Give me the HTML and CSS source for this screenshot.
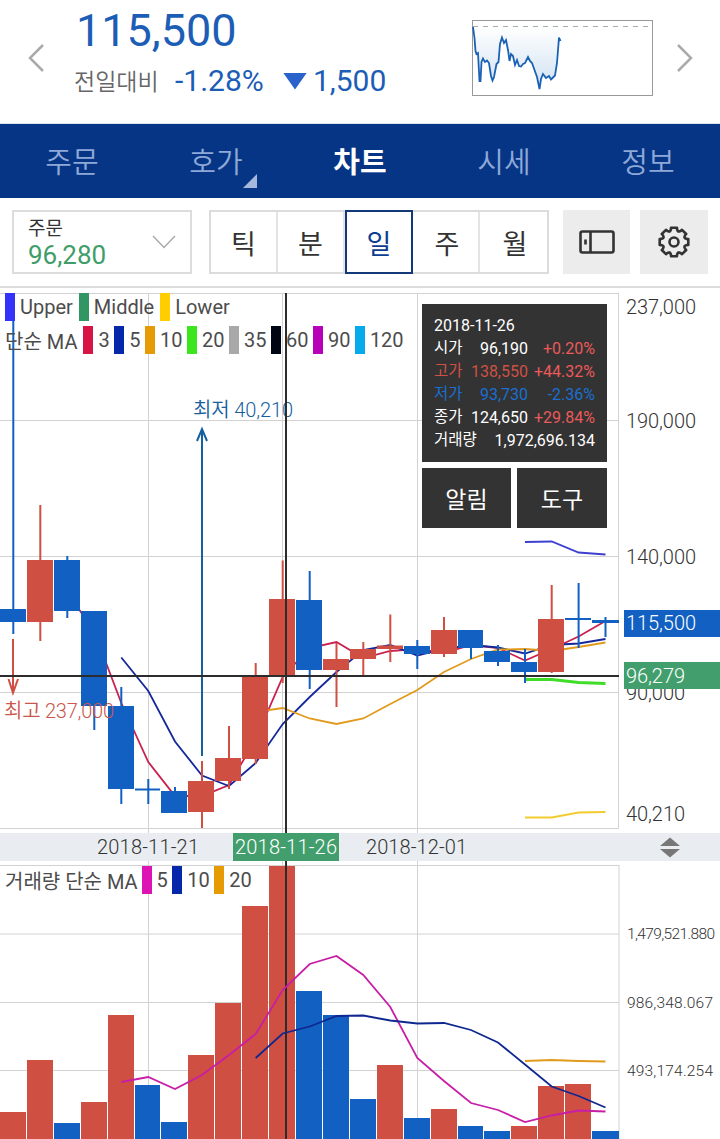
FILE: index.html
```html
<!DOCTYPE html>
<html lang="ko">
<head>
    <meta charset="utf-8">
    <title>차트</title>
    <link rel="stylesheet" href="styles.css">
</head>
<body>
    <header class="quote">
        <svg class="arrow" width="16" height="28" viewBox="0 0 16 28"><path d="M15 1 L2 14 L15 27"/></svg>
        <div class="quote-info">
            <div class="price">115,500</div>
            <div class="change">
                <span class="change-label">전일대비</span>
                <span class="rate">-1.28%</span>
                <span class="down"></span>
                <span class="diff">1,500</span>
            </div>
        </div>
        <svg class="spark" width="182" height="77" viewBox="471 19 182 77">
            <defs>
                <linearGradient id="fade" x1="0" y1="0" x2="0" y2="1">
                    <stop offset="0" stop-color="#fff"/>
                    <stop offset="1" stop-color="#cfe0f2"/>
                </linearGradient>
            </defs>
            <path fill="url(#fade)" d="M473 27 L476 53 L478 53 L480 81 L482 60 L484 58 L488 62 L492 80 L495 70 L498 62 L500 42 L502 37 L504 43 L506 40 L510 61 L512 53 L515 65 L517 61 L520 66 L528 57 L532 63 L537 77 L540 89 L542 76 L544 74 L546 78 L549 76 L552 79 L555 75 L557 63 L559 37 L561 27 Z"/>
            <rect class="spark-frame" x="472.5" y="20.5" width="180" height="75"/>
            <line class="spark-base" x1="473" y1="26.5" x2="648" y2="26.5"/>
            <polyline class="spark-line" points="473,27 474.5,38 475.5,51 476.5,54 478,53 479.5,81 480.5,81 481.5,62 483,58.5 485,62 487,60.5 489,63 491,76 492.5,80.5 494,77 496.5,64 498.5,62 500,44 502,37.5 504,43 506,40 508,50 509.5,61 511,54 513,56 515,65 517,60 519,66 521,66.5 523,64 525,63 528,57 530,61 532,63 537,77 539.5,89 541,79 543,74 546,78 549,76 551,79.5 555,75.5 557,63 559,37.5 560.5,41"/>
        </svg>
        <svg class="arrow" width="16" height="28" viewBox="0 0 16 28"><path d="M1 1 L14 14 L1 27"/></svg>
    </header>

    <nav class="tabs">
        <a class="tab">주문</a>
        <a class="tab more">호가</a>
        <a class="tab active">차트</a>
        <a class="tab">시세</a>
        <a class="tab">정보</a>
    </nav>

    <div class="toolbar">
        <div class="order">
            <div>
                <div class="order-label">주문</div>
                <div class="order-price">96,280</div>
            </div>
            <svg width="24" height="14" viewBox="0 0 24 14"><path d="M1 1 L12 12.5 L23 1"/></svg>
        </div>
        <div class="periods">
            <button class="period">틱</button>
            <button class="period">분</button>
            <button class="period selected">일</button>
            <button class="period">주</button>
            <button class="period">월</button>
        </div>
        <button class="tool">
            <svg width="36" height="24" viewBox="0 0 36 24">
                <rect x="1.5" y="1.5" width="33" height="21" rx="2"/>
                <path d="M11.5 2 V22 M6.5 9.5 V14.5"/>
            </svg>
        </button>
        <button class="tool">
            <svg width="34" height="34" viewBox="-17 -17 34 34">
                <path id="gear"/>
                <circle r="4.5"/>
            </svg>
        </button>
    </div>

    <section class="panel">
        <svg id="priceChart" class="canvas" width="720" height="545" viewBox="0 288 720 545">
            <path class="grid" d="M0 293.5 H619 M0 420.5 H619 M0 556.5 H619 M0 692.5 H619 M0 828.5 H619 M148.5 293 V833 M282.5 293 V833 M417.5 293 V833 M618.5 293 V829"/>
            <g id="averages"></g>
            <g id="candles"></g>
            <path class="low-mark" d="M202 756 V429 M197 441 L202 429 L207 441"/>
            <path class="high-mark" d="M13 639 V693 M8.5 679 L13 693 L18 679"/>
            <text class="low-text" x="193" y="417" textLength="100">최저 40,210</text>
            <text class="high-text" x="4" y="718" textLength="110">최고 237,000</text>
            <path class="cross" d="M286 293 V833 M0 676 H619"/>
            <g class="axis">
                <text x="626" y="314" textLength="70">237,000</text>
                <text x="626" y="428" textLength="70">190,000</text>
                <text x="626" y="564" textLength="70">140,000</text>
                <text x="626" y="700" textLength="59">90,000</text>
                <text x="626" y="821" textLength="59">40,210</text>
            </g>
            <rect class="now" x="624" y="610" width="96" height="27"/>
            <rect class="picked" x="624" y="662" width="96" height="27"/>
            <g class="axis on">
                <text x="626" y="630" textLength="70">115,500</text>
                <text x="626" y="683" textLength="59">96,279</text>
            </g>
        </svg>
        <div class="legend bands">
            <i class="blue"></i><span>Upper</span>
            <i class="green"></i><span>Middle</span>
            <i class="yellow"></i><span>Lower</span>
        </div>
        <div class="legend ma">
            <b>단순 MA</b>
            <i class="crimson"></i><span>3</span>
            <i class="navy"></i><span>5</span>
            <i class="orange"></i><span>10</span>
            <i class="lime"></i><span>20</span>
            <i class="gray"></i><span>35</span>
            <i class="black"></i><span>60</span>
            <i class="purple"></i><span>90</span>
            <i class="sky"></i><span>120</span>
        </div>
        <div class="overlay">
            <div class="ohlc">
                <div class="row"><span>2018-11-26</span></div>
                <div class="row"><span>시가</span><span class="val">96,190</span><span class="pct up">+0.20%</span></div>
                <div class="row high"><span>고가</span><span class="val">138,550</span><span class="pct up">+44.32%</span></div>
                <div class="row low"><span>저가</span><span class="val">93,730</span><span class="pct">-2.36%</span></div>
                <div class="row"><span>종가</span><span class="val">124,650</span><span class="pct up">+29.84%</span></div>
                <div class="row"><span>거래량</span><span class="val wide">1,972,696.134</span></div>
            </div>
            <div class="actions">
                <button>알림</button>
                <button>도구</button>
            </div>
        </div>
    </section>

    <svg class="dates" width="720" height="28" viewBox="0 833 720 28">
        <text x="97" y="854" textLength="102">2018-11-21</text>
        <rect class="picked" x="233" y="833" width="106" height="28"/>
        <text class="on" x="235" y="854" textLength="102">2018-11-26</text>
        <text x="366" y="854" textLength="101">2018-12-01</text>
        <path class="sort" d="M660 846 L670 837.5 L680 846 Z M660 849 L670 857.5 L680 849 Z"/>
    </svg>

    <section class="panel">
        <svg class="canvas" width="720" height="278" viewBox="0 861 720 278">
            <path class="grid" d="M0 865.5 H619 M0 934 H619 M0 1002.5 H619 M0 1070.5 H619 M148.5 861 V1139 M282.5 861 V1139 M417.5 861 V1139 M619 865 V1139"/>
            <g id="volumes"></g>
            <path class="cross" d="M286 861 V1139"/>
            <g id="volumeAverages"></g>
            <g class="axis small">
                <text x="627" y="939" textLength="88">1,479,521.880</text>
                <text x="627" y="1007.5" textLength="86">986,348.067</text>
                <text x="627" y="1075.5" textLength="86">493,174.254</text>
            </g>
        </svg>
        <div class="legend volume">
            <b>거래량 단순 MA</b>
            <i class="magenta"></i><span>5</span>
            <i class="navy"></i><span>10</span>
            <i class="orange"></i><span>20</span>
        </div>
    </section>

    <script src="chart.js"></script>
</body>
</html>
```

FILE: styles.css
```css
* {
    box-sizing: border-box;
}
body {
    margin: 0;
    width: 720px;
    height: 1139px;
    overflow: hidden;
    background-color: #fff;
    color: #444;
    font-family: Roboto, "Noto Sans CJK KR", sans-serif;
    font-weight: 400;
}
svg {
    display: block;
    fill: none;
}
button {
    border: none;
    padding: 0;
    font-family: inherit;
}

/* quote header */
.quote {
    display: flex;
    height: 124px;
    padding: 0 26px 0 28px;
    border-bottom: 1px solid #dde3ee;
}
.arrow {
    margin-top: 44px;
    stroke: #aaa;
    stroke-width: 2.5;
}
.quote-info {
    width: 397px;
    margin: 5px 0 0 30px;
    color: #1c5db6;
}
.price {
    height: 52px;
    padding-left: 2px;
    font-size: 45px;
    line-height: 51px;
}
.change {
    display: flex;
    align-items: center;
    height: 46px;
    font-size: 30px;
    white-space: nowrap;
}
.change-label {
    width: 101px;
    color: #666;
    font-size: 23px;
    font-weight: 350;
}
.rate {
    width: 108px;
}
.down {
    width: 24px;
    height: 17px;
    margin: 2px 6px 0 0;
    background-color: #2a62cc;
    clip-path: polygon(0 0, 100% 0, 50% 100%);
}
.spark {
    margin: 19px 24px 0 0;
}
.spark-frame {
    stroke: #999;
}
.spark-base {
    stroke: #aaa;
    stroke-dasharray: 5 5;
}
.spark-line {
    stroke: #1b62b5;
    stroke-width: 1.8;
}

/* tabs */
.tabs {
    display: flex;
    height: 74px;
    background-color: #073585;
}
.tab {
    position: relative;
    flex: 1;
    padding-top: 2px;
    color: #8ea9d8;
    font-size: 29px;
    font-weight: 350;
    line-height: 74px;
    text-align: center;
}
.tab.active {
    color: #fff;
    font-weight: 700;
}
.tab.more::after {
    content: "";
    position: absolute;
    right: 31px;
    bottom: 10px;
    width: 14px;
    height: 14px;
    background-color: #a3b8dc;
    clip-path: polygon(100% 0, 100% 100%, 0 100%);
}

/* toolbar */
.toolbar {
    display: flex;
    height: 90px;
    padding: 12px 12px 0;
    border-bottom: 2px solid #dcdcdc;
}
.order {
    display: flex;
    justify-content: space-between;
    align-items: center;
    width: 180px;
    height: 64px;
    padding: 0 14px;
    border: 2px solid #dcdcdc;
}
.order svg {
    stroke: #aaa;
    stroke-width: 1.5;
}
.order-label {
    color: #333;
    font-size: 19px;
    line-height: 26px;
}
.order-price {
    color: #409d69;
    font-size: 26px;
    line-height: 26px;
}
.periods {
    display: flex;
    width: 340px;
    height: 64px;
    margin: 0 14px 0 17px;
    border: 2px solid #dcdcdc;
}
.period {
    flex: 0 0 67px;
    border-right: 2px solid #e4e4e4;
    background-color: #fff;
    color: #333;
    font-size: 27px;
}
.period:last-child {
    border-right: none;
}
.period.selected {
    flex: 0 0 68px;
    margin: -2px 0;
    border: 2px solid #123a79;
    color: #0b3d91;
}
.selected ~ .period {
    padding-left: 3px;
}
.tool {
    display: flex;
    justify-content: center;
    align-items: center;
    width: 67px;
    height: 64px;
    margin-right: 10px;
    background-color: #ececec;
}
.tool:last-child {
    width: 68px;
    margin-right: 0;
}
.tool svg {
    stroke: #333;
    stroke-width: 2.6;
    stroke-linejoin: round;
}

/* charts */
.panel {
    position: relative;
}
.grid {
    stroke: #d2d2d2;
}
.cross {
    stroke: #2c2c2c;
    stroke-width: 2;
}
.low-mark {
    stroke: #17609f;
    stroke-width: 2;
}
.high-mark {
    stroke: #cf4f43;
    stroke-width: 2;
}
.low-text,
.high-text {
    font-size: 20px;
    font-weight: 350;
}
.low-text {
    fill: #17609f;
}
.high-text {
    fill: #c9574c;
}
.axis {
    fill: #333;
    font-size: 20px;
    font-weight: 350;
}
.axis.small {
    font-size: 15.5px;
}
.axis.on {
    fill: #fff;
}
.now {
    fill: #1160c2;
}
.picked {
    fill: #429f6d;
}
.dates {
    background-color: #e9edf1;
    font-size: 20px;
}
.dates text {
    fill: #333;
    font-weight: 350;
}
.dates text.on {
    fill: #fff;
}
.sort {
    fill: #777;
}

/* legends */
.legend {
    position: absolute;
    left: 5px;
    display: flex;
    align-items: center;
    height: 28px;
    color: #4c4c4c;
    font-size: 20px;
    white-space: nowrap;
}
.legend b {
    margin-right: 6px;
    font-weight: 400;
}
.legend i {
    width: 10px;
    height: 28px;
    margin-right: 5px;
}
.legend span {
    margin-right: 4.5px;
}
.bands {
    top: 5px;
}
.bands span {
    margin-right: 6px;
}
.ma {
    top: 38px;
}
.volume {
    top: 5px;
}
.legend.volume b {
    margin-right: 4px;
}
.blue { background-color: #3232fa; }
.green { background-color: #329664; }
.yellow { background-color: #ffcd00; }
.crimson { background-color: #d71446; }
.navy { background-color: #0528aa; }
.orange { background-color: #e69b05; }
.lime { background-color: #3ce61e; }
.gray { background-color: #a9a9a9; }
.black { background-color: #000514; }
.purple { background-color: #b900b9; }
.sky { background-color: #05aaeb; }
.magenta { background-color: #dc14b4; }

/* selected day */
.overlay {
    position: absolute;
    top: 16px;
    left: 422px;
    width: 185px;
}
.ohlc {
    height: 158px;
    padding: 10px 12px;
    background-color: #333;
    color: #fff;
    font-size: 16px;
}
.row {
    display: flex;
    height: 23px;
    line-height: 23px;
}
.row span:first-child {
    flex: none;
}
.row:not(:first-child) span:first-child {
    font-size: 15.5px;
}
.val {
    flex: 1;
    text-align: right;
}
.pct {
    width: 67px;
    text-align: right;
}
.up {
    color: #ec5a5a;
}
.high {
    color: #cf5045;
}
.low {
    color: #1a6fd0;
}
.actions {
    display: flex;
    gap: 6px;
    margin-top: 6px;
}
.actions button {
    width: 89px;
    height: 60px;
    background-color: #333;
    color: #fff;
    font-size: 23px;
}
.actions button:last-child {
    width: 90px;
}
```

FILE: chart.js
```js
const RED = '#cf4f43';
const BLUE = '#1160c2';

// column left edges and wick centres
const left = [0, 27, 54, 81, 108, 135, 161, 188, 215, 242, 269, 296, 323, 350, 377, 404, 431, 458, 484, 511, 538, 565, 592];
const mid = [13.3, 40.3, 67.3, 94.3, 121.3, 148.3, 175, 202, 229, 255.7, 282.7, 309.7, 336.5, 363.3, 390.3, 417.3, 444, 471, 498, 525, 551.7, 578.6, 605.5];

// [color, body top, body bottom, wick top, wick bottom]
const candles = [
    [BLUE, 609, 622, 320, 634],
    [RED, 560, 622, 505, 641],
    [BLUE, 560, 611, 556, 618],
    [BLUE, 611, 706, 611, 730],
    [BLUE, 706, 789, 687, 804],
    [BLUE, 788.5, 790.5, 779, 804],
    [BLUE, 791, 813, 787, 813],
    [RED, 781, 812, 761, 828],
    [RED, 758, 781, 726, 789],
    [RED, 676, 759, 663, 764],
    [RED, 599, 676, 560.5, 683],
    [BLUE, 600, 670, 571, 689],
    [RED, 659, 670, 643, 707],
    [RED, 649, 659, 642, 676],
    [RED, 645.5, 649, 614.5, 662],
    [BLUE, 646, 654, 640, 669],
    [RED, 630, 654, 617, 657],
    [BLUE, 630, 648, 630, 659],
    [BLUE, 651, 662, 645, 666],
    [BLUE, 662, 672, 649, 683],
    [RED, 619, 672, 585, 673],
    [BLUE, 618, 620, 583, 648],
    [BLUE, 620, 623, 617, 637]
];

// [first column, color, width, values]
const averages = [
    [2, '#c9214f', 1.8, [592, 632, 703, 762, 796, 796, 785, 739, 677, 648, 642, 658, 651, 649, 653, 645, 648, 660.5, 649, 636.5, 621]],
    [4, '#14289a', 1.8, [657.5, 691, 741.5, 775.5, 786, 763, 724, 697, 672, 650, 645, 655.5, 649, 645, 647.5, 653.5, 645, 643.5, 639]],
    [9, '#e29a1c', 1.8, [712, 708, 718.5, 724, 718.5, 704, 690, 672, 659, 649.5, 649, 651, 647, 642.5]],
    [19, '#3f3fd2', 1.8, [542, 541.5, 552.5, 554.5]],
    [19, '#3fdc28', 3, [679.5, 679.5, 682.5, 683.5]],
    [19, '#f2cb2e', 2, [817.5, 817.5, 812.5, 812]]
];

const volumes = [
    [RED, 1112], [RED, 1060], [BLUE, 1123], [RED, 1102], [RED, 1015], [BLUE, 1085],
    [BLUE, 1122], [RED, 1055], [RED, 1003], [RED, 906], [RED, 866], [BLUE, 991],
    [BLUE, 1015], [BLUE, 1099], [RED, 1065], [BLUE, 1118], [RED, 1109], [BLUE, 1126],
    [BLUE, 1131], [RED, 1126], [RED, 1086], [RED, 1084], [BLUE, 1131]
];

const volumeAverages = [
    [19, '#e29a1c', 2, [1061, 1060, 1061, 1061.5]],
    [4, '#c81ea6', 1.8, [1082, 1077, 1089, 1075, 1055, 1034, 990, 964, 956, 975, 1007, 1058, 1081, 1103, 1110, 1122, 1115.5, 1110.5, 1111.5]],
    [9, '#0f2890', 1.8, [1058, 1033.5, 1026.5, 1016, 1015.5, 1020.5, 1023.5, 1023, 1030, 1042.5, 1064.5, 1086.5, 1096, 1107.5]]
];

function add(parent, name, attrs) {
    const el = document.createElementNS('http://www.w3.org/2000/svg', name);
    for (const key in attrs) {
        el.setAttribute(key, attrs[key]);
    }
    document.getElementById(parent).appendChild(el);
}

function barWidth(i) {
    if (i === left.length - 1) return 27;
    return left[i + 1] - left[i] - 1;
}

function drawLines(parent, lines) {
    lines.forEach(([start, color, width, values]) => {
        const points = values.map((y, i) => mid[start + i] + ',' + y).join(' ');
        add(parent, 'polyline', { points: points, stroke: color, 'stroke-width': width });
    });
}

drawLines('averages', averages);
drawLines('volumeAverages', volumeAverages);

candles.forEach(([color, top, bottom, high, low], i) => {
    add('candles', 'rect', { x: mid[i] - 1, y: high, width: 2, height: low - high, fill: color });
    add('candles', 'rect', { x: left[i], y: top, width: barWidth(i), height: bottom - top, fill: color });
});

volumes.forEach(([color, top], i) => {
    add('volumes', 'rect', { x: left[i], y: top, width: barWidth(i), height: 1139 - top, fill: color });
});

// settings icon: eight teeth round the hub
const gear = [];
for (let i = 0; i < 8; i++) {
    [[-20, 11.5], [-14, 12.8], [-12, 14.6], [12, 14.6], [14, 12.8], [20, 11.5]].forEach(([deg, r]) => {
        const a = (i * 45 + deg) * Math.PI / 180;
        gear.push((r * Math.sin(a)).toFixed(1) + ' ' + (-r * Math.cos(a)).toFixed(1));
    });
}
document.getElementById('gear').setAttribute('d', 'M' + gear.join(' L') + ' Z');
```
